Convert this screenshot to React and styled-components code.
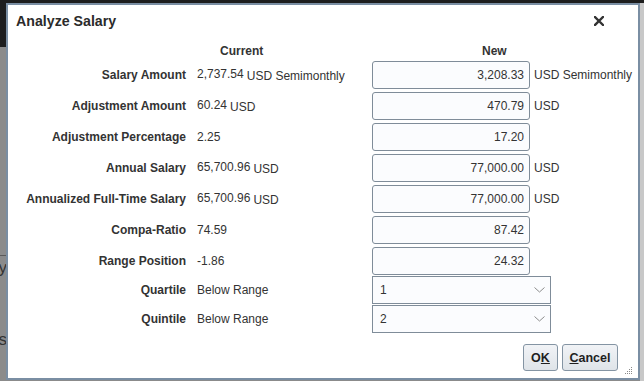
import styled, { createGlobalStyle } from "styled-components"

const GlobalStyle = createGlobalStyle`
    html, body {
        margin:0;
        padding:0;
        width:644px;
        height:381px;
        overflow:hidden;
        font-family:"Liberation Sans", Arial, sans-serif;
    }
`

const Page = styled.div`
    position:relative;
    width:644px;
    height:381px;
    display:flex;
    overflow:hidden;
`
const Backdrop = styled.div`
    flex:1;
    display:flex;
    flex-direction:column;
    background-color:#8b8b8b;
`
const TopBar = styled.div`
    height:47px;
    background-color:#1d1d1d;
`
const BgContent = styled.div`
    display:flex;
    flex-direction:column;
    align-items:flex-end;
    width:7px;
    overflow:hidden;
    padding-top:${props => props.top}px;
`
const BgLink = styled.div`
    font-size:17px;
    color:#333;
    white-space:nowrap;
    border-top:${props => props.ruled ? "1px solid #5a5a5a" : "none"};
    padding-top:${props => props.ruled ? "2px" : "0"};
    margin-bottom:${props => props.gap}px;
`
const ScrollStrip = styled.div`
    width:4px;
    border-top:3px solid #1d1d1d;
    background-color:#c8c8c8;
`

const Dialog = styled.div`
    position:absolute;
    left:6px;
    top:3px;
    width:634px;
    height:377px;
    box-sizing:border-box;
    border:2px solid #7a8ea3;
    background-color:#ffffff;
    display:flex;
    flex-direction:column;
    color:#333333;
`
const TitleBar = styled.div`
    height:31px;
    display:flex;
    align-items:center;
    justify-content:space-between;
    padding:0 34px 0 8px;
`
const Title = styled.div`
    font-size:14.2px;
    font-weight:bold;
    color:#2b2b2b;
`
const Close = styled.svg`
    width:10px;
    height:10px;
    cursor:pointer;
`

const Form = styled.div`
    display:flex;
    flex-direction:column;
`
const HeaderRow = styled.div`
    display:grid;
    grid-template-columns:189px 175px auto;
    height:22px;
    padding-top:8px;
    box-sizing:border-box;
    font-size:12px;
    font-weight:bold;
    line-height:14px;
`
const ColHead = styled.div`
    padding-left:${props => props.indent}px;
`
const Row = styled.div`
    display:grid;
    grid-template-columns:189px 175px auto 1fr;
    align-items:center;
    height:28px;
    margin-top:${props => props.tight ? 1 : 3}px;
    font-size:12px;
`
const Label = styled.div`
    text-align:right;
    padding-right:11px;
    font-weight:bold;
    white-space:nowrap;
`
const Current = styled.div`
    white-space:nowrap;
`
const Num = styled.span`
    vertical-align:${props => props.raised ? "2px" : "0"};
`
const Unit = styled.span`
    margin-left:3px;
`
const Field = styled.input`
    width:158px;
    height:28px;
    box-sizing:border-box;
    border:1px solid #7f8c99;
    border-radius:3px;
    background-color:#fbfcfe;
    text-align:right;
    padding:0 5px 0 0;
    font-family:inherit;
    font-size:12px;
    color:#333;
    outline:none;
`
const After = styled.div`
    padding-left:4px;
    white-space:nowrap;
`
const Select = styled.div`
    width:179px;
    height:28px;
    box-sizing:border-box;
    border:1px solid #7f8c99;
    background-color:#fbfcfe;
    display:flex;
    align-items:center;
    justify-content:space-between;
    padding:0 5px 0 7px;
    cursor:pointer;
`
const Chevron = styled.svg`
    width:11px;
    height:6px;
`

const Footer = styled.div`
    display:flex;
    justify-content:flex-end;
    gap:4px;
    padding:11px 20px 0 0;
`
const Button = styled.button`
    height:27px;
    min-width:${props => props.w}px;
    box-sizing:border-box;
    border:1px solid #8494a3;
    border-radius:3px;
    background:linear-gradient(#f1f3f6, #dfe4e9);
    font-family:inherit;
    font-size:12.5px;
    font-weight:bold;
    color:#1f1f1f;
    padding:0 6px;
    cursor:pointer;
    u { text-decoration:underline; }
`
const Grip = styled.svg`
    position:absolute;
    right:5px;
    bottom:3px;
    width:8px;
    height:8px;
`

const rows = [
    { label: "Salary Amount", cur: "2,737.54", curUnit: "USD Semimonthly", val: "3,208.33", unit: "USD Semimonthly" },
    { label: "Adjustment Amount", cur: "60.24", curUnit: "USD", val: "470.79", unit: "USD" },
    { label: "Adjustment Percentage", cur: "2.25", val: "17.20" },
    { label: "Annual Salary", cur: "65,700.96", curUnit: "USD", val: "77,000.00", unit: "USD" },
    { label: "Annualized Full-Time Salary", cur: "65,700.96", curUnit: "USD", val: "77,000.00", unit: "USD" },
    { label: "Compa-Ratio", cur: "74.59", val: "87.42" },
    { label: "Range Position", cur: "-1.86", val: "24.32" },
]

const selects = [
    { label: "Quartile", cur: "Below Range", val: "1" },
    { label: "Quintile", cur: "Below Range", val: "2" },
]

const gripDots = [[6, 0], [4, 2], [6, 2], [2, 4], [4, 4], [6, 4], [0, 6], [2, 6], [4, 6], [6, 6]]

const App = () => {
  return (
    <Page>
        <GlobalStyle />
        <Backdrop>
            <TopBar />
            <BgContent top={208}>
                <BgLink ruled gap={52}>Salary</BgLink>
                <BgLink gap={0}>Actions</BgLink>
            </BgContent>
        </Backdrop>
        <ScrollStrip />
        <Dialog role="dialog">
            <TitleBar>
                <Title>Analyze Salary</Title>
                <Close viewBox="0 0 10 10">
                    <path d="M1 1 L9 9 M9 1 L1 9" stroke="#333" strokeWidth="2.4" strokeLinecap="square" />
                </Close>
            </TitleBar>
            <Form>
                <HeaderRow>
                    <div />
                    <ColHead indent={23}>Current</ColHead>
                    <ColHead indent={110}>New</ColHead>
                </HeaderRow>
                {rows.map((r) => (
                    <Row key={r.label}>
                        <Label>{r.label}</Label>
                        <Current>
                            <Num raised={!!r.curUnit}>{r.cur}</Num>
                            {r.curUnit && <Unit>{r.curUnit}</Unit>}
                        </Current>
                        <Field readOnly defaultValue={r.val} />
                        <After>{r.unit}</After>
                    </Row>
                ))}
                {selects.map((s) => (
                    <Row tight key={s.label}>
                        <Label>{s.label}</Label>
                        <Current>{s.cur}</Current>
                        <Select>
                            <span>{s.val}</span>
                            <Chevron viewBox="0 0 11 6">
                                <path d="M0.5 0.5 L5.5 5 L10.5 0.5" fill="none" stroke="#8c8c8c" strokeWidth="1" />
                            </Chevron>
                        </Select>
                        <After />
                    </Row>
                ))}
            </Form>
            <Footer>
                <Button w={35}>O<u>K</u></Button>
                <Button w={56}><u>C</u>ancel</Button>
            </Footer>
            <Grip viewBox="0 0 8 8">
                {gripDots.map(([x, y]) => (
                    <rect key={`${x}-${y}`} x={x} y={y} width="1" height="1" fill="#8a8a8a" />
                ))}
            </Grip>
        </Dialog>
    </Page>
  )
}

export default App
